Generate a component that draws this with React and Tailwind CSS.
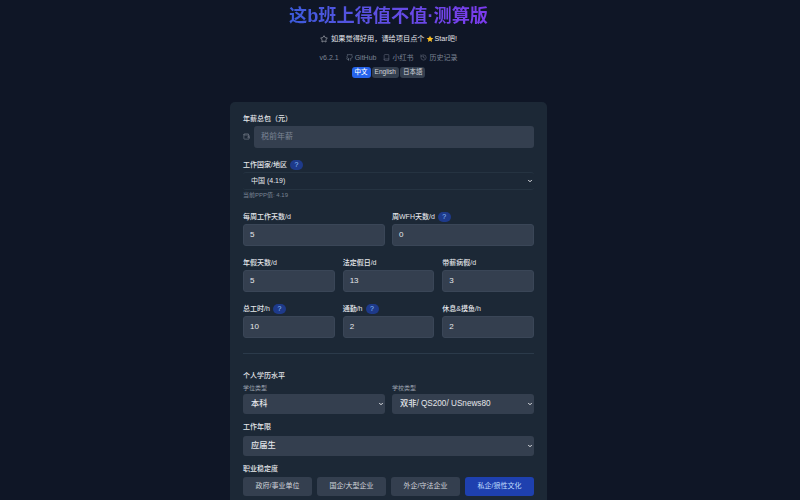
import React from 'react';
import { Star, Book, History, Wallet, ChevronDown } from 'lucide-react';
import { FiGithub } from 'react-icons/fi';

const fontStack = { fontFamily: '"Liberation Sans", "Noto Sans CJK SC", sans-serif' };

const HelpBadge = () => (
  <span className="inline-flex items-center justify-center w-[13px] h-[10px] rounded-full bg-[#1e3a8a] text-[#93c5fd] text-[7px] leading-none">?</span>
);

const Label = ({ children, help }) => (
  <div className="flex items-center gap-[3px] h-[9px] text-[7px] leading-none font-medium text-[#e5e7eb]">
    <span>{children}</span>
    {help && <HelpBadge />}
  </div>
);

const NumberField = ({ label, help, value }) => (
  <div className="flex-1 min-w-0">
    <Label help={help}>{label}</Label>
    <div className="mt-[3px] h-[22px] flex items-center px-[6px] rounded-[3px] bg-[#343f4f] border border-[#3a4657] text-[8px] text-[#e5e7eb]">{value}</div>
  </div>
);

// native select with the small chevron laid over it
const SelectField = ({ value, className }) => (
  <div className="relative">
    <select
      defaultValue={value}
      className={`block appearance-none w-full pl-[8px] outline-none [color-scheme:dark] ${className}`}
    >
      <option>{value}</option>
    </select>
    <ChevronDown className="absolute right-[1px] top-1/2 -translate-y-1/2 w-[6px] h-[6px] text-[#e5e7eb] pointer-events-none" strokeWidth={4} />
  </div>
);

const filledSelect = 'h-[20px] rounded-[3px] bg-[#343f4f] text-[8.2px] font-medium text-[#e5e7eb]';

const stabilityOptions = ['政府/事业单位', '国企/大型企业', '外企/守法企业', '私企/狼性文化'];

export default function App() {
  return (
    <div style={fontStack} className="h-screen overflow-hidden bg-[#0f1626]">
      <div className="w-[777px] flex flex-col items-center">
        <h1 className="mt-[6px] h-[20px] text-[18.2px] leading-[20px] font-bold bg-gradient-to-r from-[#3b5bdb] to-[#7c3aed] bg-clip-text text-transparent">
          这b班上得值不值·测算版
        </h1>

        <div className="mt-[8px] flex items-center h-[10px] text-[7.2px] leading-none text-[#e5e7eb]">
          <Star className="w-[8px] h-[8px] mr-[3px]" strokeWidth={1.5} />
          <span>如果觉得好用，请给项目点个</span>
          <svg viewBox="0 0 24 24" className="w-[8px] h-[8px] mx-[1px]">
            <path fill="#fbbf24" d="M12 2l3 6.6 7 .8-5.2 4.8 1.4 7L12 17.6 5.8 21.2l1.4-7L2 9.4l7-.8z" />
          </svg>
          <span>Star吧!</span>
        </div>

        <div className="mt-[8px] flex items-center h-[10px] text-[7px] leading-none text-[#7b8494]">
          <span>v6.2.1</span>
          <FiGithub className="ml-[7px] mr-[2px] w-[7px] h-[7px]" />
          <span>GitHub</span>
          <Book className="ml-[7px] mr-[2px] w-[7px] h-[7px]" strokeWidth={1.5} />
          <span>小红书</span>
          <History className="ml-[7px] mr-[2px] w-[7px] h-[7px]" strokeWidth={1.5} />
          <span>历史记录</span>
        </div>

        <div className="mt-[5px] flex items-center gap-[1px] text-[6.5px] leading-none">
          <span className="h-[11px] px-[3px] flex items-center rounded-[3px] bg-[#2563eb] text-white font-medium">中文</span>
          <span className="h-[11px] px-[3px] flex items-center rounded-[3px] bg-[#343f4f] text-[#d1d5db]">English</span>
          <span className="h-[11px] px-[3px] flex items-center rounded-[3px] bg-[#343f4f] text-[#d1d5db]">日本語</span>
        </div>

        <div className="mt-[24px] w-[317px] rounded-t-[5px] bg-[#1c2836] px-[13px] pt-[12px] pb-[12px]">
          <Label>年薪总包（元）</Label>
          <div className="mt-[3px] flex items-center">
            <Wallet className="w-[7px] h-[7px] text-[#9ca3af] mr-[4px] -translate-y-[1px]" strokeWidth={1.5} />
            <div className="flex-1 h-[22px] flex items-center px-[7px] rounded-[3px] bg-[#343f4f] text-[8px] text-[#7b8494]">税前年薪</div>
          </div>

          <div className="mt-[12px]"><Label help>工作国家/地区</Label></div>
          <div className="mt-[3px]">
            <SelectField value="中国 (4.19)" className="h-[18px] rounded-[3px] bg-transparent border-y border-[#253341] text-[7px] text-[#e5e7eb]" />
          </div>
          <div className="mt-[1px] text-[6px] leading-[8px] text-[#7b8494]">当前PPP值: 4.19</div>

          <div className="mt-[13px] flex gap-[7px]">
            <NumberField label="每周工作天数/d" value="5" />
            <NumberField label="周WFH天数/d" help value="0" />
          </div>

          <div className="mt-[12px] flex gap-[8px]">
            <NumberField label="年假天数/d" value="5" />
            <NumberField label="法定假日/d" value="13" />
            <NumberField label="带薪病假/d" value="3" />
          </div>

          <div className="mt-[12px] flex gap-[8px]">
            <NumberField label="总工时/h" help value="10" />
            <NumberField label="通勤/h" help value="2" />
            <NumberField label="休息&摸鱼/h" value="2" />
          </div>

          <div className="mt-[15px] h-px bg-[#2b3a4a]" />

          <div className="mt-[17px]"><Label>个人学历水平</Label></div>
          <div className="mt-[4px] flex gap-[7px]">
            <div className="flex-1 min-w-0">
              <div className="h-[8px] text-[6px] leading-[8px] text-[#9ca3af]">学位类型</div>
              <div className="mt-[2px]"><SelectField value="本科" className={filledSelect} /></div>
            </div>
            <div className="flex-1 min-w-0">
              <div className="h-[8px] text-[6px] leading-[8px] text-[#9ca3af]">学校类型</div>
              <div className="mt-[2px]"><SelectField value="双非/ QS200/ USnews80" className={filledSelect} /></div>
            </div>
          </div>

          <div className="mt-[8px]"><Label>工作年限</Label></div>
          <div className="mt-[5px]"><SelectField value="应届生" className={filledSelect} /></div>

          <div className="mt-[8px]"><Label>职业稳定度</Label></div>
          <div className="mt-[4px] flex gap-[5px]">
            {stabilityOptions.map((option, i) => (
              <div
                key={option}
                className={`flex-1 h-[19px] flex items-center justify-center rounded-[3px] text-[7px] ${i === 3 ? 'bg-[#1e40af] text-[#bfdbfe]' : 'bg-[#343f4f] text-[#d1d5db]'}`}
              >
                {option}
              </div>
            ))}
          </div>
          <div className="h-[40px]" />
        </div>
      </div>
    </div>
  );
}
